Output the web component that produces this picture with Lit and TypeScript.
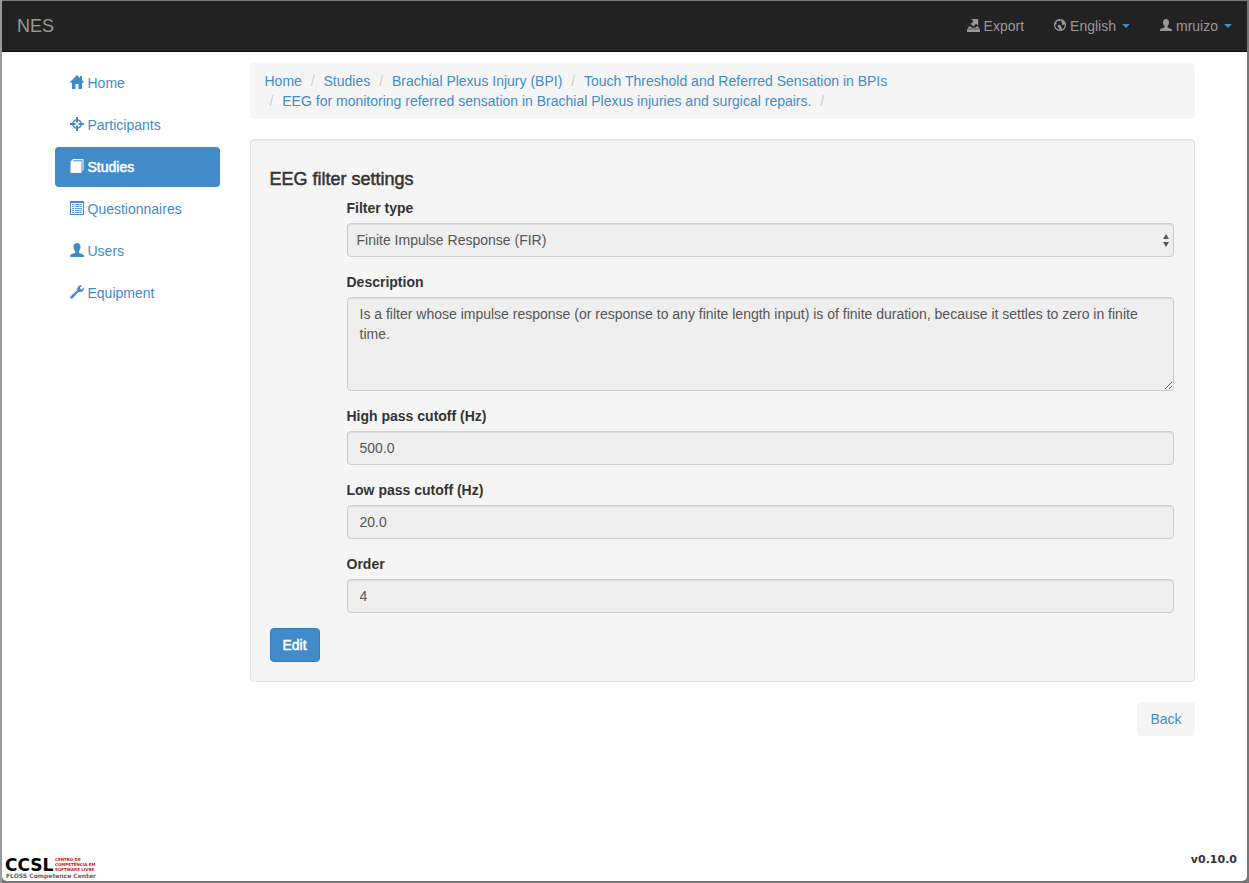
import { LitElement, html, svg, css } from "lit";
import { customElement, property } from "lit/decorators.js";

const glyphs: Record<string, unknown> = {
  home: svg`<path d="M7 0 L10 3 V1 h2 v4 L14 7 L13.600 7.700 H12 V14 H8.500 V9 H5.500 V14 H2 V7.700 H0.400 L0 7 Z"/>`,
  target: svg`<path fill-rule="evenodd" d="M6 0h2v2.200C9.800 2.500 11.500 4.200 11.800 6H14v2h-2.200C11.500 9.800 9.800 11.500 8 11.800V14H6v-2.200C4.200 11.500 2.500 9.800 2.200 8H0V6h2.200C2.500 4.200 4.200 2.500 6 2.200ZM6 3.700C4.900 4 4 4.900 3.700 6H5.500v2H3.700C4 9.100 4.900 10 6 10.300V8.500h2v1.800C9.100 10 10 9.100 10.300 8H8.500V6h1.800C10 4.900 9.100 4 8 3.700V5.500H6Z"/>`,
  book: svg`<path d="M0.500 2.500 L3 0 H13.500 V11 L12.500 12.500 V1.200 H3.500 L2.500 2.300 H11.500 V14 H0.500 Z"/>`,
  list: svg`<path fill-rule="evenodd" d="M0 0h14v14H0ZM1 2v11h12V2Z"/><path d="M2 3h2v1H2zM5 3h7v1H5zM2 5h2v1H2zM5 5h7v1H5zM2 7h2v1H2zM5 7h7v1H5zM2 9h2v1H2zM5 9h7v1H5zM2 11h2v1H2zM5 11h7v1H5z" opacity="0.85"/>`,
  user: svg`<path d="M7 0C9.300 0 10.600 1.500 10.500 3.700C10.500 5.600 9.800 7 8.800 8V9.600C9.500 10.700 14 11.200 14 12.800V14H0V12.800C0 11.200 4.500 10.700 5.200 9.600V8C4.200 7 3.500 5.600 3.500 3.700C3.400 1.500 4.700 0 7 0Z"/>`,
  wrench: svg`<path d="M12.200 0.400 L10 2.800 L10.400 4.100 L11.600 4.400 L13.800 2.200 C14.400 4.800 12.500 7 9.800 6.900 C9 6.800 8.500 7.100 8 7.600 L2.700 13.200 C1.400 14.500 -0.600 12.700 0.600 11.300 L6.500 5.900 C7.100 5.300 7.200 4.900 7.200 4.100 C7.200 1.500 9.600 -0.500 12.200 0.400Z"/>`,
  export: svg`<path d="M4.500 0H12V7.300L9.800 5.200L6.800 8.100L4 5.500L7 2.500ZM2 8H4L5.300 9.500H9L10.300 8H12L13.500 10.500H0.500ZM0 11H14V14H0Z"/>`,
  globe: svg`<path fill-rule="evenodd" d="M7 0a7 7 0 1 0 0.010 0ZM4.700 1.900L6.200 2.500L7.600 1.500L9 2L8.200 3.500L9.700 4.400L8.900 6L10.500 7L12.500 6.500C12.700 9 11.300 11.300 9.200 12.100L9.100 10.300L7.800 9L8.200 7.600L6.100 6.700L4.200 7.700L4.600 9.600L6.200 10.700L6.100 12.500C3.200 11.900 1.300 9.700 1.300 6.700L3 6.100L2.600 3.800Z"/>`,
};

@customElement("nes-icon")
export class NesIcon extends LitElement {
  @property() name = "home";
  @property({ type: Number }) size = 14;

  static styles = css`
    :host { display: inline-block; flex: none; padding-bottom: 2px; }
    svg { display: block; fill: currentColor; }
  `;

  render() {
    return html`<svg width=${this.size} height=${this.size} viewBox="0 0 14 14" aria-hidden="true">${glyphs[this.name]}</svg>`;
  }
}

@customElement("app-root")
export class AppRoot extends LitElement {
  static styles = css`
    :host {
      display: flex;
      box-sizing: border-box;
      min-height: 100vh;
      padding: 1px 2px 2px;
      background: linear-gradient(#9a9a9a, #9a9a9a) 0 0 / 2px 100% no-repeat #777;
      font-family: "Liberation Sans", Arial, sans-serif;
      font-size: 14px;
      line-height: 20px;
      color: #333;
    }
    * { box-sizing: border-box; }
    a { color: #428bca; text-decoration: none; }
    .page {
      flex: 1;
      display: flex;
      flex-direction: column;
      min-width: 0;
      background: #fff;
      border-radius: 0 0 5px 5px;
    }
    .navbar {
      display: flex;
      justify-content: space-between;
      background: #222;
      border-bottom: 1px solid #080808;
    }
    .brand { padding: 15px; font-size: 18px; color: #999; }
    .tools { display: flex; }
    .tool { display: flex; align-items: center; gap: 4px; padding: 15px; color: #999; }
    .caret {
      margin-left: 2px;
      border: 4px solid transparent;
      border-top-color: #428bca;
      border-bottom: 0;
    }
    .container {
      display: grid;
      grid-template-columns: minmax(0, 165fr) minmax(0, 945fr);
      column-gap: 30px;
      align-items: start;
      width: 100%;
      max-width: 1170px;
      margin: 0 auto;
      padding: 11px 15px;
    }
    .menu { display: flex; flex-direction: column; gap: 2px; }
    .item {
      display: flex;
      align-items: center;
      gap: 4px;
      padding: 10px 15px;
      border-radius: 4px;
    }
    .active { background: #428bca; color: #fff; -webkit-text-stroke: 0.5px; }
    .breadcrumb {
      margin: 0 0 20px;
      padding: 8px 15px;
      list-style: none;
      background: #f5f5f5;
      border-radius: 4px;
    }
    .crumb { display: inline-block; }
    .crumb + .crumb::before { content: "/\\00a0"; padding: 0 5px; color: #ccc; }
    .well {
      padding: 19px;
      background: #f5f5f5;
      border: 1px solid #e3e3e3;
      border-radius: 4px;
      box-shadow: inset 0 1px 1px rgba(0, 0, 0, 0.05);
    }
    .title { margin: 10px 0 9px; font-size: 18px; line-height: 20px; font-weight: 500; -webkit-text-stroke: 0.5px; }
    .fields { display: flex; flex-direction: column; gap: 15px; margin: 0 1px 15px 77px; }
    .field { display: flex; flex-direction: column; gap: 5px; }
    .label { font-weight: 700; }
    .control {
      display: block;
      width: 100%;
      height: 34px;
      margin: 0;
      padding: 6px 12px;
      font: inherit;
      color: #555;
      background: #eee;
      border: 1px solid #ccc;
      border-radius: 4px;
      box-shadow: inset 0 1px 1px rgba(0, 0, 0, 0.075);
      opacity: 1;
    }
    .area { height: auto; resize: vertical; }
    .choice { display: grid; align-items: center; }
    .choice > * { grid-area: 1 / 1; }
    .select { appearance: none; padding: 6px 9px; }
    .arrows { justify-self: end; margin-right: 5px; fill: #555; pointer-events: none; }
    .button {
      padding: 6px 12px;
      font: inherit;
      color: #fff;
      background: #428bca;
      border: 1px solid #357ebd;
      border-radius: 4px;
      -webkit-text-stroke: 0.5px;
    }
    .actions { display: flex; justify-content: flex-end; margin-top: 20px; }
    .back { padding: 7px 13px; background: #f5f5f5; border-radius: 4px; }
    .footer {
      display: flex;
      justify-content: space-between;
      align-items: flex-end;
      margin-top: auto;
      padding: 0 10px 1px 3px;
      font-family: "DejaVu Sans", Verdana, sans-serif;
      font-weight: 700;
    }
    .logo { display: block; }
    .version { font-size: 11px; padding-bottom: 10px; }
  `;

  private menu = [
    ["home", "Home"],
    ["target", "Participants"],
    ["book", "Studies"],
    ["list", "Questionnaires"],
    ["user", "Users"],
    ["wrench", "Equipment"],
  ];

  private crumbs = [
    "Home",
    "Studies",
    "Brachial Plexus Injury (BPI)",
    "Touch Threshold and Referred Sensation in BPIs",
    "EEG for monitoring referred sensation in Brachial Plexus injuries and surgical repairs.",
    "",
  ];

  private input(id: string, label: string, value: string) {
    return html`<div class="field">
      <label class="label" for=${id}>${label}</label>
      <input class="control" id=${id} type="text" .value=${value} disabled />
    </div>`;
  }

  render() {
    return html`<div class="page">
      <header class="navbar">
        <a class="brand" href="#">NES</a>
        <nav class="tools">
          <a class="tool" href="#"><nes-icon name="export" size="13"></nes-icon>Export</a>
          <a class="tool" href="#"><nes-icon name="globe" size="12"></nes-icon>English<span class="caret"></span></a>
          <a class="tool" href="#"><nes-icon name="user" size="12"></nes-icon>mruizo<span class="caret"></span></a>
        </nav>
      </header>
      <div class="container">
        <nav class="menu">
          ${this.menu.map(
            ([icon, text]) => html`<a class="item ${text === "Studies" ? "active" : ""}" href="#"><nes-icon name=${icon}></nes-icon>${text}</a>`
          )}
        </nav>
        <main>
          <ol class="breadcrumb">
            ${this.crumbs.map((c) => html`<li class="crumb">${c ? html`<a href="#">${c}</a>` : ""}</li> `)}
          </ol>
          <form class="well">
            <h4 class="title">EEG filter settings</h4>
            <div class="fields">
              <div class="field">
                <label class="label" for="type">Filter type</label>
                <div class="choice">
                  <select class="control select" id="type" disabled>
                    <option>Finite Impulse Response (FIR)</option>
                  </select>
                  <svg class="arrows" width="6" height="13" viewBox="0 0 6 13" aria-hidden="true">
                    <path d="M3 0L6 5H0ZM0 8H6L3 13Z" />
                  </svg>
                </div>
              </div>
              <div class="field">
                <label class="label" for="description">Description</label>
                <textarea class="control area" id="description" rows="4" disabled .value=${"Is a filter whose impulse response (or response to any finite length input) is of finite duration, because it settles to zero in finite time."}></textarea>
              </div>
              ${this.input("high", "High pass cutoff (Hz)", "500.0")}
              ${this.input("low", "Low pass cutoff (Hz)", "20.0")}
              ${this.input("order", "Order", "4")}
            </div>
            <button class="button" type="button">Edit</button>
          </form>
          <div class="actions"><a class="back" href="#">Back</a></div>
        </main>
      </div>
      <footer class="footer">
        <svg class="logo" width="96" height="30" viewBox="0 0 96 30" role="img" aria-label="CCSL">
          <text x="0" y="21" font-size="17" fill="#000">CCSL</text>
          <g font-size="4" fill="#c4161c">
            <text x="50" y="11">CENTRO DE</text>
            <text x="50" y="16">COMPETÊNCIA EM</text>
            <text x="50" y="21">SOFTWARE LIVRE</text>
          </g>
          <text x="1" y="28" font-size="6" fill="#666">FLOSS Competence Center</text>
        </svg>
        <span class="version">v0.10.0</span>
      </footer>
    </div>`;
  }
}
